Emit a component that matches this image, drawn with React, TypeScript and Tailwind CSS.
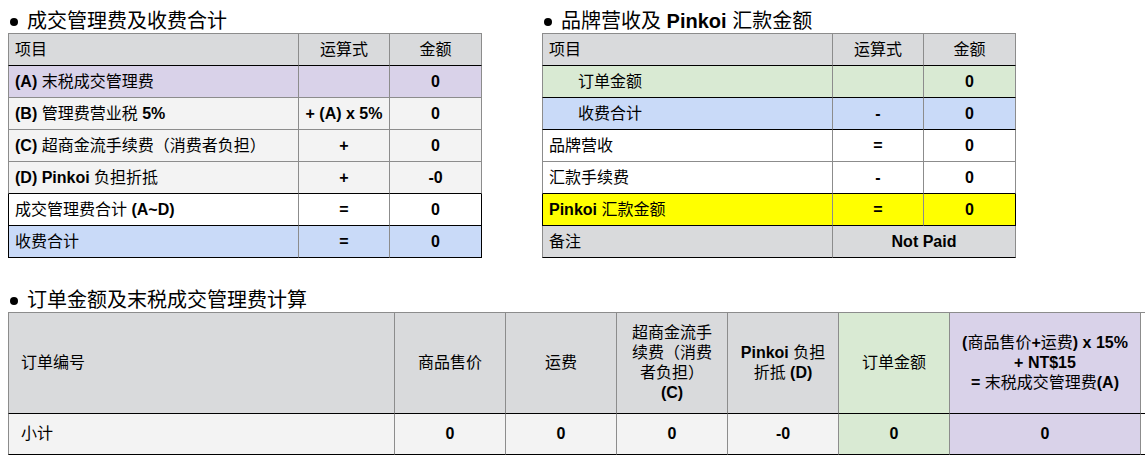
import React from "react";
import clsx from "clsx";

const B = ({ children }: { children: React.ReactNode }) => (
  <span className="font-bold">{children}</span>
);

const Title = ({ children }: { children: React.ReactNode }) => (
  <div className="flex h-[24px] items-center text-[20px] leading-[24px] text-black">
    <span className="ml-[2px] mr-[9px] mt-[2px] inline-block h-[8px] w-[8px] rounded-full bg-black" />
    <span>{children}</span>
  </div>
);

type Row = {
  label: React.ReactNode;
  op: React.ReactNode;
  val: React.ReactNode;
  bg: string;
  bottomBlack?: boolean;
  sideBlack?: boolean;
  indent?: boolean;
  merged?: boolean;
};

const leftRows: Row[] = [
  { label: <><B>(A)</B> 末税成交管理费</>, op: "", val: "0", bg: "bg-[#d9d2e9]" },
  { label: <><B>(B)</B> 管理费营业税 <B>5%</B></>, op: "+ (A) x 5%", val: "0", bg: "bg-[#f3f3f3]" },
  { label: <><B>(C)</B> 超商金流手续费（消费者负担）</>, op: "+", val: "0", bg: "bg-[#f3f3f3]" },
  { label: <><B>(D) Pinkoi</B> 负担折抵</>, op: "+", val: "-0", bg: "bg-[#f3f3f3]", bottomBlack: true },
  { label: <>成交管理费合计 <B>(A~D)</B></>, op: "=", val: "0", bg: "bg-white", bottomBlack: true, sideBlack: true },
  { label: <>收费合计</>, op: "=", val: "0", bg: "bg-[#c9daf8]", bottomBlack: true, sideBlack: true },
];

const rightRows: Row[] = [
  { label: <>订单金额</>, op: "", val: "0", bg: "bg-[#d9ead3]", indent: true, bottomBlack: true },
  { label: <>收费合计</>, op: "-", val: "0", bg: "bg-[#c9daf8]", indent: true, bottomBlack: true },
  { label: <>品牌营收</>, op: "=", val: "0", bg: "bg-white" },
  { label: <>汇款手续费</>, op: "-", val: "0", bg: "bg-white", bottomBlack: true },
  { label: <><B>Pinkoi</B> 汇款金额</>, op: "=", val: "0", bg: "bg-[#ffff00]", bottomBlack: true, sideBlack: true },
  { label: <>备注</>, op: "", val: "Not Paid", bg: "bg-[#d9dadc]", bottomBlack: true, merged: true },
];

function SummaryTable({ rows }: { rows: Row[] }) {
  return (
    <table className="w-[474px] table-fixed border-separate border-spacing-0 text-[16px] text-black">
      <colgroup>
        <col className="w-[291px]" />
        <col className="w-[91px]" />
        <col className="w-[92px]" />
      </colgroup>
      <thead>
        <tr>
          <td className="h-[33px] border-l border-t border-r border-b border-[#8c8c8c] border-b-black bg-[#d9dadc] pl-[6px] align-middle">项目</td>
          <td className="h-[33px] border-t border-r border-b border-[#8c8c8c] border-b-black bg-[#d9dadc] text-center align-middle">运算式</td>
          <td className="h-[33px] border-t border-r border-b border-[#8c8c8c] border-b-black bg-[#d9dadc] text-center align-middle">金额</td>
        </tr>
      </thead>
      <tbody>
        {rows.map((r, i) => (
          <tr key={i}>
            <td
              className={clsx(
                "h-[32px] border-l border-r border-b border-[#8c8c8c] align-middle whitespace-nowrap",
                r.bg,
                r.bottomBlack && "border-b-black",
                r.sideBlack && "border-l-black",
                r.indent ? "pl-[35px]" : "pl-[6px]"
              )}
            >
              {r.label}
            </td>
            {r.merged ? (
              <td
                colSpan={2}
                className={clsx(
                  "h-[32px] border-r border-b border-[#8c8c8c] text-center align-middle font-bold",
                  r.bg,
                  r.bottomBlack && "border-b-black"
                )}
              >
                {r.val}
              </td>
            ) : (
              <>
                <td
                  className={clsx(
                    "h-[32px] border-r border-b border-[#8c8c8c] text-center align-middle font-bold",
                    r.bg,
                    r.bottomBlack && "border-b-black"
                  )}
                >
                  {r.op}
                </td>
                <td
                  className={clsx(
                    "h-[32px] border-r border-b border-[#8c8c8c] text-center align-middle font-bold",
                    r.bg,
                    r.bottomBlack && "border-b-black",
                    r.sideBlack && "border-r-black"
                  )}
                >
                  {r.val}
                </td>
              </>
            )}
          </tr>
        ))}
      </tbody>
    </table>
  );
}

export default function App() {
  const hd = "h-[102px] border-t border-r border-b border-[#8c8c8c] border-b-black text-center align-middle leading-[20px] px-[4px]";
  const bd = "h-[41px] border-r border-b border-[#8c8c8c] border-b-black text-center align-middle font-bold";
  return (
    <div className="min-h-[464px] w-[1145px] overflow-hidden bg-white pt-[9px] font-['Liberation_Sans',Arial,'Noto_Sans_CJK_SC',sans-serif] text-black">
      <div className="flex gap-[60px] pl-[8px]">
        <section>
          <Title>成交管理费及收费合计</Title>
          <SummaryTable rows={leftRows} />
        </section>
        <section>
          <Title>
            品牌营收及 <B>Pinkoi</B> 汇款金额
          </Title>
          <SummaryTable rows={rightRows} />
        </section>
      </div>
      <section className="mt-[30px] pl-[8px]">
        <Title>订单金额及末税成交管理费计算</Title>
        <table className="w-[1253px] table-fixed border-separate border-spacing-0 text-[16px]">
          <colgroup>
            <col className="w-[387px]" />
            <col className="w-[111px]" />
            <col className="w-[111px]" />
            <col className="w-[111px]" />
            <col className="w-[111px]" />
            <col className="w-[111px]" />
            <col className="w-[191px]" />
            <col className="w-[120px]" />
          </colgroup>
          <thead>
            <tr>
              <td className={clsx(hd, "border-l bg-[#d9dadc] !text-left pl-[12px]")}>订单编号</td>
              <td className={clsx(hd, "bg-[#d9dadc]")}>商品售价</td>
              <td className={clsx(hd, "bg-[#d9dadc]")}>运费</td>
              <td className={clsx(hd, "bg-[#d9dadc]")}>
                超商金流手
                <br />
                续费（消费
                <br />
                者负担）
                <br />
                <B>(C)</B>
              </td>
              <td className={clsx(hd, "bg-[#d9dadc]")}>
                <B>Pinkoi</B> 负担
                <br />
                折抵 <B>(D)</B>
              </td>
              <td className={clsx(hd, "bg-[#d9ead3]")}>订单金额</td>
              <td className={clsx(hd, "bg-[#d9d2e9] whitespace-nowrap")}>
                <B>(</B>商品售价<B>+</B>运费<B>) x 15%</B>
                <br />
                <B>+ NT$15</B>
                <br />
                <B>=</B> 末税成交管理费<B>(A)</B>
              </td>
              <td className={clsx(hd, "bg-white")}></td>
            </tr>
          </thead>
          <tbody>
            <tr>
              <td className={clsx(bd, "border-l bg-[#f3f3f3] !text-left pl-[12px] !font-normal")}>小计</td>
              <td className={clsx(bd, "bg-[#f3f3f3]")}>0</td>
              <td className={clsx(bd, "bg-[#f3f3f3]")}>0</td>
              <td className={clsx(bd, "bg-[#f3f3f3]")}>0</td>
              <td className={clsx(bd, "bg-[#f3f3f3]")}>-0</td>
              <td className={clsx(bd, "bg-[#d9ead3]")}>0</td>
              <td className={clsx(bd, "bg-[#d9d2e9]")}>0</td>
              <td className={clsx(bd, "bg-white")}></td>
            </tr>
          </tbody>
        </table>
      </section>
    </div>
  );
}
